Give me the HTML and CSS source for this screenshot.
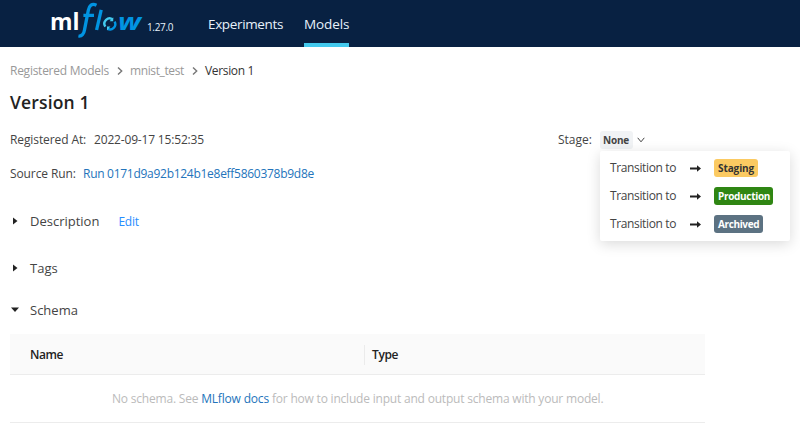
FILE: index.html
```html
<!DOCTYPE html>
<html lang="en">
<head>
<meta charset="utf-8">
<title>mnist_test v1 - MLflow Model</title>
<link rel="stylesheet" href="styles.css">
</head>
<body>
<header class="topbar">
  <svg class="logo" viewBox="0 0 94 42" role="img" aria-label="mlflow">
    <text x="0" y="30.3" class="logo-ml" textLength="29.5" lengthAdjust="spacingAndGlyphs">ml</text>
    <path d="M46.5 5.2c-4.7-2-7.2.2-8.2 5.2l-3.7 19c-.8 4.8-2.8 7.2-6.2 6.6M33.4 15.4h10.6" class="logo-f"/>
    <path d="M51.2 9.8L46.6 30" class="logo-l"/>
    <path d="M55.3 26.6A5.2 5.2 0 0 1 62.8 19.6" class="ring-light"/>
    <path d="M64.6 21.6A5.2 5.2 0 0 1 57.4 28.6" class="ring-dark"/>
    <path d="M63.2 17.2v4h-3.6zM57 30.6v-4.2h3.4z" class="ring-head"/>
    <text x="68" y="30.2" class="logo-w" textLength="23" lengthAdjust="spacingAndGlyphs">w</text>
  </svg>
  <span class="release">1.27.0</span>
  <nav class="nav">
    <a class="nav-link experiments">Experiments</a>
    <a class="nav-link models active">Models</a>
  </nav>
</header>
<main class="page">
  <div class="crumbs">
    <a class="crumb registered">Registered Models</a>
    <svg class="chevron" viewBox="0 0 6 8"><path d="M1 .5L4.7 4 1 7.5"/></svg>
    <a class="crumb mnist">mnist_test</a>
    <svg class="chevron" viewBox="0 0 6 8"><path d="M1 .5L4.7 4 1 7.5"/></svg>
    <span class="crumb current">Version 1</span>
  </div>
  <h1 class="title">Version 1</h1>
  <div class="meta">
    <span class="label registered-at">Registered At:</span>
    <span class="date">2022-09-17 15:52:35</span>
    <div class="stage">
      <span class="stage-label">Stage:</span>
      <span class="tag none">None</span>
      <svg class="down" viewBox="0 0 8 6"><path d="M.7.8L4 4.8 7.3.8"/></svg>
      <div class="menu">
        <div class="item"><span class="transition">Transition to</span><svg class="arrow" viewBox="0 0 11 7"><path d="M0 2.5h7V.3L11 3.5 7 6.7V4.5H0z"/></svg><span class="tag staging">Staging</span></div>
        <div class="item"><span class="transition">Transition to</span><svg class="arrow" viewBox="0 0 11 7"><path d="M0 2.5h7V.3L11 3.5 7 6.7V4.5H0z"/></svg><span class="tag production">Production</span></div>
        <div class="item"><span class="transition">Transition to</span><svg class="arrow" viewBox="0 0 11 7"><path d="M0 2.5h7V.3L11 3.5 7 6.7V4.5H0z"/></svg><span class="tag archived">Archived</span></div>
      </div>
    </div>
  </div>
  <div class="meta source">
    <span class="label source-run">Source Run:</span>
    <a class="run">Run 0171d9a92b124b1e8eff5860378b9d8e</a>
  </div>
  <div class="section description"><svg class="caret" viewBox="0 0 8 8"><path d="M2 .5L6.5 4 2 7.5z"/></svg><span>Description</span><a class="edit">Edit</a></div>
  <div class="section tags"><svg class="caret" viewBox="0 0 8 8"><path d="M2 .5L6.5 4 2 7.5z"/></svg><span>Tags</span></div>
  <div class="section schema"><svg class="caret" viewBox="0 0 8 8"><path d="M0 1.5h8L4 6z"/></svg><span>Schema</span></div>
  <div class="table">
    <div class="thead"><span class="col name">Name</span><span class="col type">Type</span></div>
    <div class="empty"><span>No schema. See <a class="docs">MLflow docs</a> for how to include input and output schema with your model.</span></div>
  </div>
</main>
</body>
</html>
```
FILE: styles.css
```css
* { box-sizing: border-box; }
body { margin: 0; width: 800px; height: 434px; overflow: hidden; background: #fff; color: #444; font: 12px/18px "Open Sans", "Noto Sans", sans-serif; white-space: nowrap; }
svg { display: block; flex: none; }

.topbar { display: flex; height: 47px; background: #082142; color: #e7f1fb; }
.logo { width: 94px; height: 42px; margin-left: 50px; }
.logo-ml { font: 700 24px "Open Sans", sans-serif; fill: #fff; }
.logo-w { font: italic 700 23px "Open Sans", sans-serif; fill: #0194e2; }
.logo-f, .logo-l { fill: none; stroke: #0194e2; stroke-width: 3.3; }
.ring-light, .ring-dark { fill: none; stroke: #43c9ed; stroke-width: 2.4; }
.ring-dark { stroke: #0194e2; }
.ring-head { fill: #43c9ed; }
.release { width: 30px; margin: 18px 0 0 3px; font-size: 10px; letter-spacing: -.35px; }
.nav { display: flex; gap: 21px; margin-left: 31px; }
.nav-link { height: 47px; padding-top: 15px; font-size: 13.5px; }
.experiments { width: 75px; letter-spacing: -.36px; }
.models { width: 45px; letter-spacing: -.1px; }
.active { border-bottom: 4px solid #43c9ed; }

.page { padding: 15px 10px 0; }
.crumbs { display: flex; align-items: center; height: 18px; color: #999; }
.registered { width: 100px; letter-spacing: -.26px; }
.mnist { width: 55px; letter-spacing: -.38px; }
.current { color: #333; letter-spacing: -.34px; }
.chevron { width: 6px; height: 8px; margin: 0 7px; }
.chevron path { fill: none; stroke: #777; stroke-width: 1.4; }
.title { height: 24px; margin: 10px 0 0; font-size: 17.5px; line-height: 24px; font-weight: 600; letter-spacing: .15px; color: #222; }

.meta { display: flex; align-items: center; height: 18px; margin-top: 17px; }
.label { letter-spacing: -.1px; }
.registered-at { width: 84px; }
.date { letter-spacing: -.17px; }
.source { margin-top: 16px; }
.source-run { width: 73px; }
.run { color: #2374bb; letter-spacing: -.28px; }
.stage { position: relative; display: flex; align-items: center; width: 233px; margin-left: auto; margin-right: -1px; }
.stage-label { width: 42px; }
.tag { height: 18px; padding: 0 4px; border-radius: 3px; font-size: 10px; line-height: 18px; font-weight: 700; }
.none { width: 33px; padding-left: 3px; background: #f1f3f5; letter-spacing: -.2px; }
.down { width: 8px; height: 6px; margin-left: 4px; }
.down path { fill: none; stroke: #444; stroke-width: 1; }
.menu { position: absolute; left: 42px; top: 20px; width: 190px; height: 90px; padding: 3px 0; background: #fff; border-radius: 2px; box-shadow: 0 3px 14px rgba(0, 0, 0, .15); }
.item { display: flex; align-items: center; height: 28px; padding-left: 10px; }
.transition { width: 80px; letter-spacing: -.37px; }
.arrow { width: 11px; height: 7px; margin-right: 13px; fill: #222; }
.staging { width: 44px; background: #fbca62; color: #333; letter-spacing: -.1px; }
.production { width: 59px; background: #2f8613; color: #fff; letter-spacing: -.32px; }
.archived { width: 49px; background: #5c7282; color: #fff; letter-spacing: -.37px; }

.section { display: flex; align-items: center; height: 20px; font-size: 13px; }
.description { margin-top: 28px; }
.tags { margin-top: 27px; }
.schema { margin-top: 22px; }
.caret { width: 8px; height: 8px; margin: 0 11px 0 1px; fill: #222; }
.edit { margin: 1px 0 0 19px; font-size: 12px; color: #278dff; letter-spacing: -.25px; }

.table { width: 695px; margin-top: 14px; }
.thead { display: flex; align-items: center; height: 41px; padding-top: 1px; background: #fafafa; border-bottom: 1px solid #ececec; font-weight: 600; color: #222; }
.col { letter-spacing: -.4px; }
.name { width: 354px; padding-left: 20px; }
.type { height: 20px; padding-left: 7px; border-left: 1px solid #ebebeb; line-height: 20px; }
.empty { display: flex; align-items: center; height: 48px; padding: 1px 0 0 102px; border-bottom: 1px solid #ececec; color: #bbb; letter-spacing: -.2px; }
.docs { color: #2374bb; letter-spacing: -.18px; }
```
